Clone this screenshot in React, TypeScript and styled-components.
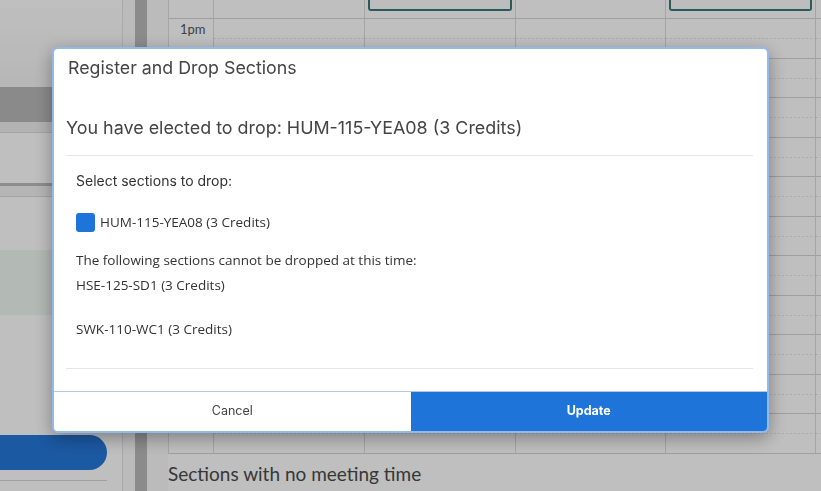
import React from 'react';
import styled, { createGlobalStyle } from 'styled-components';

const GlobalStyle = createGlobalStyle`
  html, body {
    margin: 0;
    padding: 0;
    width: 821px;
    height: 491px;
    overflow: hidden;
    background: #ffffff;
  }
  * {
    box-sizing: border-box;
  }
`;

const HEADING_FONT = `'Inter', 'Lato', sans-serif`;
const PAGE_FONT = `'Lato', 'Noto Sans', sans-serif`;
const BODY_FONT = `'Open Sans', 'Noto Sans', sans-serif`;
const BLUE = '#1f74d9';

const dayColumns = [151, 151, 150, 150, 150];
// only the first hour label is visible above the dialog
const hours = ['1pm', '', '', '', '', '', '', '', '', '', ''];
const eventColumns = [1, 3];

const droppable = ['HUM-115-YEA08 (3 Credits)'];
const locked = ['HSE-125-SD1 (3 Credits)', 'SWK-110-WC1 (3 Credits)'];

export default function App() {
  return (
    <>
      <GlobalStyle />
      <PAGE>
        <SIDEBAR>
          <SIDE_TOP />
          <SIDE_HEADER />
          <SIDE_TABS />
          <SIDE_BLOCK height={50} />
          <SIDE_RULE />
          <SIDE_SUBBAR />
          <SIDE_BLOCK height={53} />
          <SIDE_NOTE />
          <SIDE_BLOCK height={120} />
          <SIDE_BUTTON />
          <SIDE_DIVIDER />
        </SIDEBAR>
        <GUTTER>
          <GUTTER_EDGE width={12} />
          <SCROLL_TRACK />
          <GUTTER_EDGE />
        </GUTTER>
        <MAIN>
          <CALENDAR>
            <TIME_CELL />
            {dayColumns.map((_, c) => (
              <DAY_CELL key={`top-${c}`} first>
                {eventColumns.includes(c) && <EVENT_BLOCK />}
              </DAY_CELL>
            ))}
            {hours.map((hour, r) => (
              <React.Fragment key={r}>
                <TIME_CELL>{hour && <TIME_LABEL>{hour}</TIME_LABEL>}</TIME_CELL>
                {dayColumns.map((_, c) => (
                  <DAY_CELL key={`${r}-${c}`} />
                ))}
              </React.Fragment>
            ))}
          </CALENDAR>
          <NO_MEETING_TITLE>Sections with no meeting time</NO_MEETING_TITLE>
        </MAIN>
      </PAGE>

      <OVERLAY>
        <MODAL role="dialog">
          <MODAL_HEADER>
            <MODAL_TITLE>Register and Drop Sections</MODAL_TITLE>
          </MODAL_HEADER>
          <MODAL_BODY>
            <ELECTED>You have elected to drop: HUM-115-YEA08 (3 Credits)</ELECTED>
            <RULE />
            <SECTION_LIST>
              <SECTION_LABEL>Select sections to drop:</SECTION_LABEL>
              {droppable.map((s) => (
                <CHECK_ROW key={s}>
                  <CHECKBOX />
                  <span>{s}</span>
                </CHECK_ROW>
              ))}
              <NOTICE>The following sections cannot be dropped at this time:</NOTICE>
              {locked.map((s, i) => (
                <LOCKED_ITEM key={s} first={i === 0}>
                  {s}
                </LOCKED_ITEM>
              ))}
            </SECTION_LIST>
            <RULE bottom />
          </MODAL_BODY>
          <MODAL_FOOTER>
            <FOOTER_BTN>Cancel</FOOTER_BTN>
            <FOOTER_BTN primary>Update</FOOTER_BTN>
          </MODAL_FOOTER>
        </MODAL>
      </OVERLAY>
    </>
  );
}

/* ---------- background page ---------- */

const PAGE = styled.div`
  display: flex;
  width: 821px;
  height: 491px;
  overflow: hidden;
  background: #fff;
`;

const SIDEBAR = styled.aside`
  width: 122px;
  flex: none;
  display: flex;
  flex-direction: column;
  background: #fff;
`;

const SIDE_TOP = styled.div`
  height: 87px;
  background: linear-gradient(180deg, #ffffff 0%, #f4f4f4 100%);
`;

const SIDE_HEADER = styled.div`
  height: 35px;
  background: #b9b9b9;
`;

const SIDE_TABS = styled.div`
  height: 11px;
  background: #efefef;
  border-bottom: 1px solid #dcdcdc;
`;

const SIDE_BLOCK = styled.div<{ height: number }>`
  height: ${({ height }) => height}px;
  background: #fff;
`;

const SIDE_RULE = styled.div`
  height: 3px;
  background: #bdbdbd;
`;

const SIDE_SUBBAR = styled.div`
  height: 11px;
  background: #f2f2f2;
  border-bottom: 1px solid #dcdcdc;
`;

const SIDE_NOTE = styled.div`
  height: 65px;
  background: #eff8f3;
`;

const SIDE_BUTTON = styled.div`
  width: 107px;
  height: 35px;
  border-radius: 0 18px 18px 0;
  background: #2577d9;
`;

const SIDE_DIVIDER = styled.div`
  width: 107px;
  height: 1px;
  margin-top: 10px;
  background: #d6d6d6;
`;

const GUTTER = styled.div`
  width: 46px;
  flex: none;
  display: flex;
  border-left: 1px solid #e2e2e2;
`;

const GUTTER_EDGE = styled.div<{ width?: number }>`
  flex: ${({ width }) => (width ? `0 0 ${width}px` : '1')};
  background: #fafafa;
`;

const SCROLL_TRACK = styled.div`
  width: 12px;
  background: #bababa;
`;

const MAIN = styled.main`
  flex: 1;
  display: flex;
  flex-direction: column;
  min-width: 0;
`;

const CALENDAR = styled.div`
  display: grid;
  grid-template-columns: 45px ${dayColumns.map((w) => `${w}px`).join(' ')};
  grid-template-rows: 19px repeat(${hours.length}, 39.5px);
  border-left: 1px solid #dedede;
`;

const TIME_CELL = styled.div`
  border-right: 1px solid #dcdcdc;
  border-bottom: 1px solid #d4d4d4;
`;

const TIME_LABEL = styled.span`
  display: block;
  padding: 2px 0 0 11px;
  font-family: ${PAGE_FONT};
  font-size: 13px;
  line-height: 16px;
  color: #555;
`;

const DAY_CELL = styled.div<{ first?: boolean }>`
  border-right: 1px solid #dcdcdc;
  border-bottom: 1px solid #d4d4d4;
  background-image: ${({ first }) =>
    first
      ? 'none'
      : 'repeating-linear-gradient(90deg, #e6e6e6 0 2px, transparent 2px 4px)'};
  background-size: 100% 1px;
  background-position: 0 19px;
  background-repeat: no-repeat;
`;

const EVENT_BLOCK = styled.div`
  height: 11px;
  margin: 0 3px;
  border: 2px solid #3a7878;
  border-top: none;
  border-radius: 0 0 3px 3px;
  background: #fdfdfd;
`;

const NO_MEETING_TITLE = styled.h2`
  margin: 9px 0 0;
  font-family: ${PAGE_FONT};
  font-weight: 400;
  font-size: 19px;
  line-height: 22px;
  color: #4a4a4a;
`;

/* ---------- modal ---------- */

const OVERLAY = styled.div`
  position: fixed;
  inset: 0;
  display: flex;
  justify-content: center;
  align-items: flex-start;
  padding-top: 47px;
  background: rgba(0, 0, 0, 0.25);
`;

const MODAL = styled.div`
  width: 717px;
  display: flex;
  flex-direction: column;
  background: #fff;
  border: 2px solid #93b9ea;
  border-radius: 6px;
  box-shadow: 0 5px 18px rgba(0, 0, 0, 0.35);
  overflow: hidden;
`;

const MODAL_HEADER = styled.header`
  padding: 7px 14px 0;
`;

const MODAL_TITLE = styled.h1`
  margin: 0;
  font-family: ${HEADING_FONT};
  font-weight: 400;
  font-size: 17.8px;
  line-height: 24px;
  color: #454545;
`;

const MODAL_BODY = styled.div`
  padding: 0 14px 0 12px;
`;

const ELECTED = styled.h2`
  margin: 35px 0 0;
  font-family: ${HEADING_FONT};
  font-weight: 400;
  font-size: 17.9px;
  line-height: 26px;
  color: #444;
`;

const RULE = styled.hr<{ bottom?: boolean }>`
  margin: ${({ bottom }) => (bottom ? '29px 0 0' : '14px 0 0')};
  border: none;
  border-top: 1px solid #e6e6e6;
`;

const SECTION_LIST = styled.div`
  padding: 15px 10px 0;
  display: flex;
  flex-direction: column;
`;

const SECTION_LABEL = styled.div`
  font-family: ${HEADING_FONT};
  font-size: 14px;
  line-height: 20px;
  color: #333;
`;

const CHECK_ROW = styled.label`
  display: flex;
  align-items: center;
  gap: 5px;
  margin-top: 21px;
  height: 20px;
  font-family: ${BODY_FONT};
  font-size: 13.5px;
  color: #333;
`;

const CHECKBOX = styled.span`
  width: 19px;
  height: 19px;
  border-radius: 3px;
  background: ${BLUE};
  flex: none;
`;

const NOTICE = styled.p`
  margin: 18px 0 0;
  font-family: ${BODY_FONT};
  font-size: 13.5px;
  line-height: 20px;
  color: #333;
`;

const LOCKED_ITEM = styled.p<{ first?: boolean }>`
  margin: ${({ first }) => (first ? '5px' : '24px')} 0 0;
  font-family: ${BODY_FONT};
  font-size: 13.5px;
  line-height: 20px;
  color: #333;
`;

const MODAL_FOOTER = styled.footer`
  margin-top: 22px;
  display: flex;
  height: 40px;
  border-top: 1px solid #b6c9e0;
`;

const FOOTER_BTN = styled.button<{ primary?: boolean }>`
  flex: 1;
  border: none;
  margin: 0;
  padding: 0 0 3px;
  font-family: ${HEADING_FONT};
  font-size: 12.5px;
  font-weight: ${({ primary }) => (primary ? 700 : 400)};
  color: ${({ primary }) => (primary ? '#fff' : '#444')};
  background: ${({ primary }) => (primary ? BLUE : '#fff')};
  cursor: pointer;
`;
